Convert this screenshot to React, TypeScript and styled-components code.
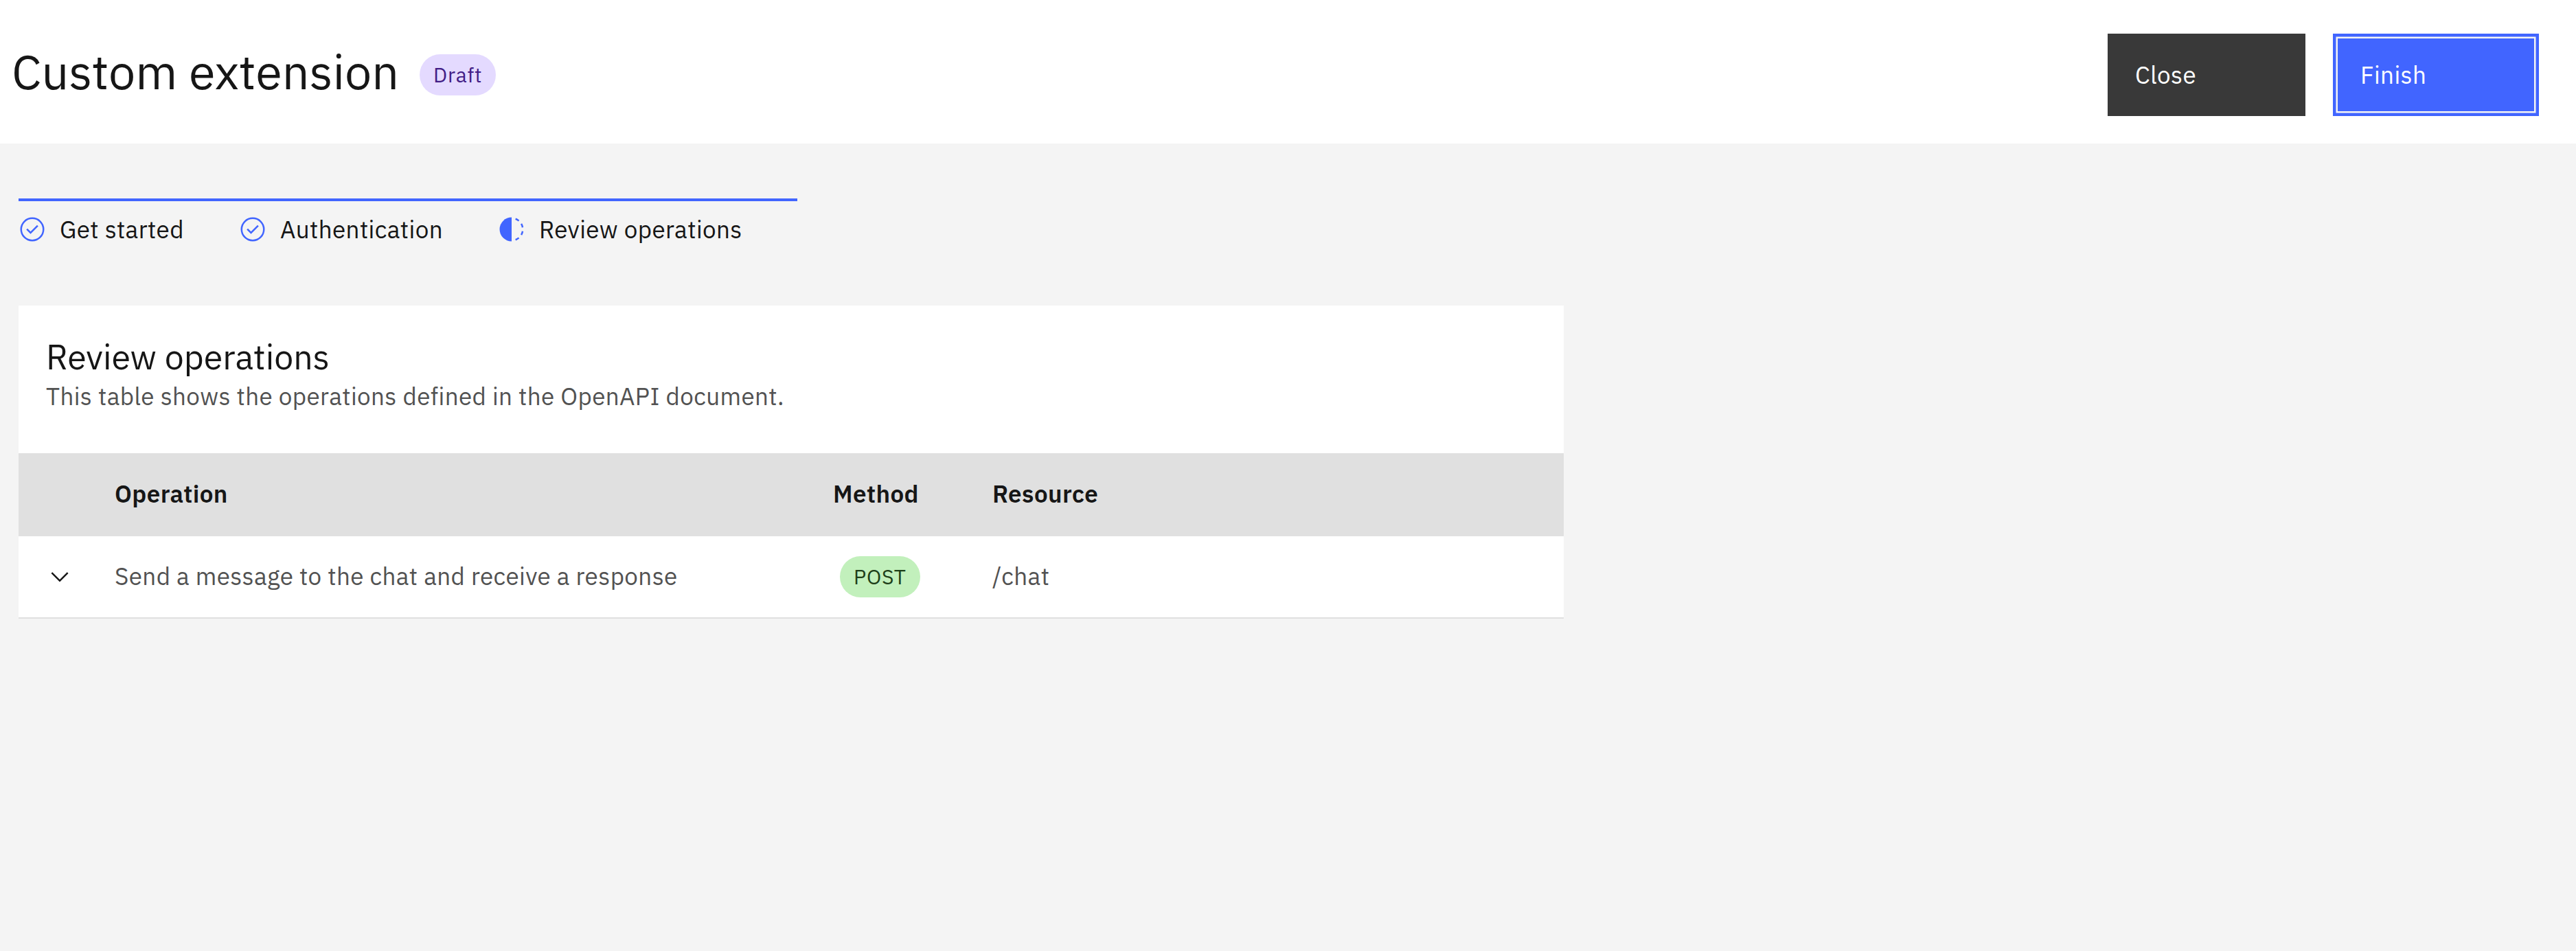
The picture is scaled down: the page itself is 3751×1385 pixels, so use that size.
import React from "react";
import styled, { createGlobalStyle, css } from "styled-components";

const color = {
  page: "#f4f4f4",
  surface: "#ffffff",
  header: "#e0e0e0",
  text: "#161616",
  textMuted: "#525252",
  interactive: "#4165ff",
  secondary: "#393939",
};

const GlobalStyle = createGlobalStyle`
  *, *::before, *::after {
    box-sizing: border-box;
  }
  body {
    margin: 0;
    background: ${color.page};
    color: ${color.text};
    font-family: "IBM Plex Sans", Roboto, "Noto Sans", sans-serif;
    font-size: 35px;
    letter-spacing: 0.4px;
    line-height: 45px;
  }
  h1, h2, p, ol {
    margin: 0;
    padding: 0;
    font-weight: 400;
  }
`;

const Page = styled.div`
  min-height: 1385px;
  background: ${color.page};
`;

const Header = styled.header`
  display: flex;
  align-items: flex-start;
  height: 209px;
  padding: 49px 54px 0 17px;
  background: ${color.surface};
`;

const Heading = styled.div`
  display: flex;
  align-items: flex-start;
  gap: 30px;
  margin-right: auto;
`;

const PageTitle = styled.h1`
  margin-top: 10px;
  font-size: 70px;
  line-height: 90px;
  letter-spacing: 0;
  white-space: nowrap;
`;

const tagTones = {
  purple: css`
    margin-top: 30px;
    background: #e4daff;
    color: #421d86;
  `,
  green: css`
    margin-left: 10px;
    background: #c2f0bc;
    color: #1d3f19;
  `,
};

const Tag = styled.span<{ $tone: keyof typeof tagTones }>`
  display: inline-flex;
  align-items: center;
  height: 60px;
  padding: 0 20px;
  border-radius: 30px;
  font-size: 30px;
  line-height: 40px;
  letter-spacing: 0.8px;
  white-space: nowrap;
  ${({ $tone }) => tagTones[$tone]}
`;

const Actions = styled.div`
  display: flex;
  gap: 40px;
`;

const Button = styled.button<{ $width: number; $primary?: boolean }>`
  display: flex;
  align-items: center;
  width: ${({ $width }) => $width}px;
  height: 120px;
  padding: 0 38px;
  border: 2px solid ${color.secondary};
  background: ${color.secondary};
  color: #ffffff;
  font: inherit;
  letter-spacing: inherit;
  ${({ $primary }) =>
    $primary &&
    css`
      border-color: ${color.interactive};
      background: ${color.interactive};
      box-shadow: inset 0 0 0 2.5px ${color.interactive}, inset 0 0 0 5px ${color.page};
    `}
`;

const Main = styled.main`
  display: flex;
  flex-direction: column;
  align-items: flex-start;
  padding: 80px 0 0 27px;
`;

const Steps = styled.ol`
  display: flex;
  height: 156px;
  border-top: 4px solid ${color.interactive};
  list-style: none;
`;

const Step = styled.li`
  display: flex;
  align-items: flex-start;
  gap: 20px;
  padding: 21px 80px 0 0;
  white-space: nowrap;
`;

const StepLabel = styled.span`
  margin-top: -2px;
`;

const Icon = styled.svg`
  display: block;
  flex: none;
  width: 40px;
  height: 40px;
  fill: currentColor;
`;

const StepIcon = styled(Icon)`
  color: ${color.interactive};
`;

const Card = styled.section`
  width: 2250px;
  background: ${color.surface};
`;

const CardHeader = styled.div`
  height: 215px;
  padding: 40px 40px 0;
`;

const CardTitle = styled.h2`
  font-size: 50px;
  line-height: 70px;
  letter-spacing: 0;
`;

const CardDescription = styled.p`
  color: ${color.textMuted};
`;

const rowGrid = css`
  display: grid;
  grid-template-columns: 100px 1046px 232px 1fr;
  align-items: center;
`;

const TableHead = styled.div`
  ${rowGrid}
  height: 121px;
  background: ${color.header};
  font-weight: 600;
`;

const TableRow = styled.div`
  ${rowGrid}
  height: 120px;
  border-bottom: 2px solid ${color.header};
  color: ${color.textMuted};
`;

const TextCell = styled.div`
  padding: 0 0 2px 40px;
  white-space: nowrap;
`;

const TagCell = styled.div`
  display: flex;
  padding-left: 40px;
`;

const ExpandCell = styled.div`
  padding-left: 40px;
  color: ${color.text};
`;

function CheckmarkOutline() {
  return (
    <StepIcon viewBox="0 0 32 32">
      <path d="M14 21.414 9 16.413 10.413 15 14 18.586 21.585 11 23 12.415z" />
      <path d="M16 2a14 14 0 1 0 14 14A14 14 0 0 0 16 2Zm0 26a12 12 0 1 1 12-12 12 12 0 0 1-12 12Z" />
    </StepIcon>
  );
}

function Incomplete() {
  return (
    <StepIcon viewBox="0 0 32 32">
      <path d="M23.7642 6.8593l1.2851-1.5315A13.976 13.976 0 0 0 20.8672 2.887l-.6836 1.8776A11.9729 11.9729 0 0 1 23.7642 6.8593Z" />
      <path d="M27.81 14l1.9677-.4128A13.8888 13.8888 0 0 0 28.14 9.0457L26.4087 10A12.52 12.52 0 0 1 27.81 14Z" />
      <path d="M20.1836 27.2354l.6836 1.8776a13.976 13.976 0 0 0 4.1821-2.4408l-1.2851-1.5315A11.9729 11.9729 0 0 1 20.1836 27.2354Z" />
      <path d="M26.4087 22 28.14 23a14.14 14.14 0 0 0 1.6382-4.5872L27.81 18.0659A12.1519 12.1519 0 0 1 26.4087 22Z" />
      <path d="M16 30V2a14 14 0 0 0 0 28Z" />
    </StepIcon>
  );
}

function ChevronDown() {
  return (
    <Icon viewBox="0 0 16 16">
      <path d="M8 11 3 6 3.7 5.3 8 9.6 12.3 5.3 13 6z" />
    </Icon>
  );
}

const steps = [
  { label: "Get started", done: true },
  { label: "Authentication", done: true },
  { label: "Review operations", done: false },
];

const operations = [
  {
    name: "Send a message to the chat and receive a response",
    method: "POST",
    resource: "/chat",
  },
];

export default function App() {
  return (
    <Page>
      <GlobalStyle />
      <Header>
        <Heading>
          <PageTitle>Custom extension</PageTitle>
          <Tag $tone="purple">Draft</Tag>
        </Heading>
        <Actions>
          <Button $width={288}>Close</Button>
          <Button $width={300} $primary>
            Finish
          </Button>
        </Actions>
      </Header>
      <Main>
        <Steps>
          {steps.map(({ label, done }) => (
            <Step key={label}>
              {done ? <CheckmarkOutline /> : <Incomplete />}
              <StepLabel>{label}</StepLabel>
            </Step>
          ))}
        </Steps>
        <Card>
          <CardHeader>
            <CardTitle>Review operations</CardTitle>
            <CardDescription>
              This table shows the operations defined in the OpenAPI document.
            </CardDescription>
          </CardHeader>
          <TableHead>
            <span />
            <TextCell>Operation</TextCell>
            <TextCell>Method</TextCell>
            <TextCell>Resource</TextCell>
          </TableHead>
          {operations.map(({ name, method, resource }) => (
            <TableRow key={name}>
              <ExpandCell>
                <ChevronDown />
              </ExpandCell>
              <TextCell>{name}</TextCell>
              <TagCell>
                <Tag $tone="green">{method}</Tag>
              </TagCell>
              <TextCell>{resource}</TextCell>
            </TableRow>
          ))}
        </Card>
      </Main>
    </Page>
  );
}
